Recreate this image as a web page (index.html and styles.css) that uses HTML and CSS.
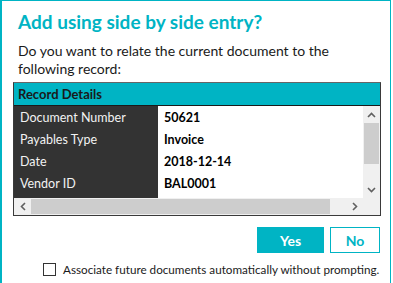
FILE: index.html
```html
<!DOCTYPE html>
<html>
<head>
<meta charset="utf-8">
<link rel="stylesheet" href="styles.css">
</head>
<body>
<div class="dialog">
  <h1 class="title">Add using side by side entry?</h1>
  <p class="msg">Do you want to relate the current document to the<br>following record:</p>
  <div class="record">
    <div class="record-head">Record Details</div>
    <div class="record-main">
      <div class="rows">
        <div class="row"><span class="label">Document Number</span><span class="value">50621</span></div>
        <div class="row"><span class="label">Payables Type</span><span class="value">Invoice</span></div>
        <div class="row"><span class="label">Date</span><span class="value">2018-12-14</span></div>
        <div class="row"><span class="label">Vendor ID</span><span class="value">BAL0001</span></div>
        <div class="row filler"><span class="label"></span><span class="value"></span></div>
      </div>
      <div class="vscroll">
        <span class="sb-btn"><svg width="9" height="6" viewBox="0 0 9 6"><path d="M1 5 L4.5 1.5 L8 5" fill="none" stroke="#606060" stroke-width="1.6"/></svg></span>
        <span class="v-thumb"></span>
        <span class="v-track"></span>
        <span class="sb-btn"><svg width="9" height="6" viewBox="0 0 9 6"><path d="M1 1 L4.5 4.5 L8 1" fill="none" stroke="#606060" stroke-width="1.6"/></svg></span>
      </div>
    </div>
    <div class="hscroll">
      <span class="sb-btn h"><svg width="6" height="9" viewBox="0 0 6 9"><path d="M5 1 L1.5 4.5 L5 8" fill="none" stroke="#606060" stroke-width="1.6"/></svg></span>
      <span class="h-thumb"></span>
      <span class="h-track"></span>
      <span class="sb-btn h"><svg width="6" height="9" viewBox="0 0 6 9"><path d="M1 1 L4.5 4.5 L1 8" fill="none" stroke="#606060" stroke-width="1.6"/></svg></span>
      <span class="corner"></span>
    </div>
  </div>
  <div class="actions">
    <button class="btn yes">Yes</button>
    <button class="btn no">No</button>
  </div>
  <label class="assoc"><span class="box"></span>Associate future documents automatically without prompting.</label>
</div>
</body>
</html>
```

FILE: styles.css
```css
html, body {
  margin: 0;
  padding: 0;
  background: #fff;
}
body {
  font-family: Lato, "Open Sans", sans-serif;
  color: #1a1a1a;
}
.dialog {
  width: 391px;
  height: 283px;
  box-sizing: border-box;
  border: 1px solid #00b4c4;
  border-left-width: 2px;
  border-bottom: none;
  display: flex;
  flex-direction: column;
}
.title {
  margin: 8px 0 0 16px;
  font-size: 19px;
  font-weight: 700;
  color: #00b4c4;
  line-height: 26px;
}
.msg {
  margin: 7px 0 0 16px;
  font-size: 14px;
  line-height: 18px;
  color: #1a1a1a;
}
.record {
  margin: 4px 0 0 11px;
  width: 366px;
  border: 1px solid #3a3a3a;
  border-top-color: #666;
  display: flex;
  flex-direction: column;
}
.record-head {
  height: 22px;
  background: #00b4c4;
  border-bottom: 1px solid #1a1a1a;
  font-size: 13px;
  font-weight: 700;
  line-height: 22px;
  padding-left: 4px;
  color: #1a1a1a;
}
.record-main {
  display: flex;
  height: 92px;
}
.rows {
  flex: 1;
  display: flex;
  flex-direction: column;
  background: #fff;
  border-bottom-right-radius: 2px;
  overflow: hidden;
}
.row {
  display: flex;
  height: 22px;
  font-size: 12.5px;
  line-height: 23px;
}
.row.filler {
  flex: 1;
}
.label {
  width: 144px;
  background: #333;
  color: #f2f2f2;
  padding-left: 6px;
  box-sizing: border-box;
}
.value {
  flex: 1;
  font-weight: 700;
  color: #000;
  padding-left: 6px;
}
.vscroll {
  width: 17px;
  background: #f0f0f0;
  display: flex;
  flex-direction: column;
}
.sb-btn {
  width: 17px;
  height: 17px;
  display: flex;
  align-items: center;
  justify-content: center;
  flex: none;
}
.v-thumb {
  height: 41px;
  background: #cdcdcd;
  margin: 0 1px;
}
.v-track {
  flex: 1;
}
.hscroll {
  height: 17px;
  display: flex;
  background: #f0f0f0;
}
.h-thumb {
  width: 299px;
  background: #cdcdcd;
  margin: 1px 0;
}
.h-track {
  flex: 1;
}
.corner {
  width: 17px;
}
.actions {
  display: flex;
  justify-content: flex-end;
  gap: 6px;
  margin: 11px 10px 0 0;
}
.btn {
  height: 26px;
  font-family: Lato, "Open Sans", sans-serif;
  font-size: 14px;
  font-weight: 700;
  border: 1px solid #00b4c4;
  padding: 0;
}
.yes {
  width: 67px;
  background: #00b4c4;
  color: #fff;
}
.no {
  width: 50px;
  background: #fff;
  color: #00b4c4;
}
.assoc {
  display: flex;
  align-items: center;
  margin: 9px 0 0 41px;
  font-size: 11.7px;
  color: #1a1a1a;
  line-height: 14px;
  white-space: nowrap;
}
.box {
  width: 11px;
  height: 11px;
  border: 1px solid #333;
  margin-right: 7px;
  flex: none;
}
```
